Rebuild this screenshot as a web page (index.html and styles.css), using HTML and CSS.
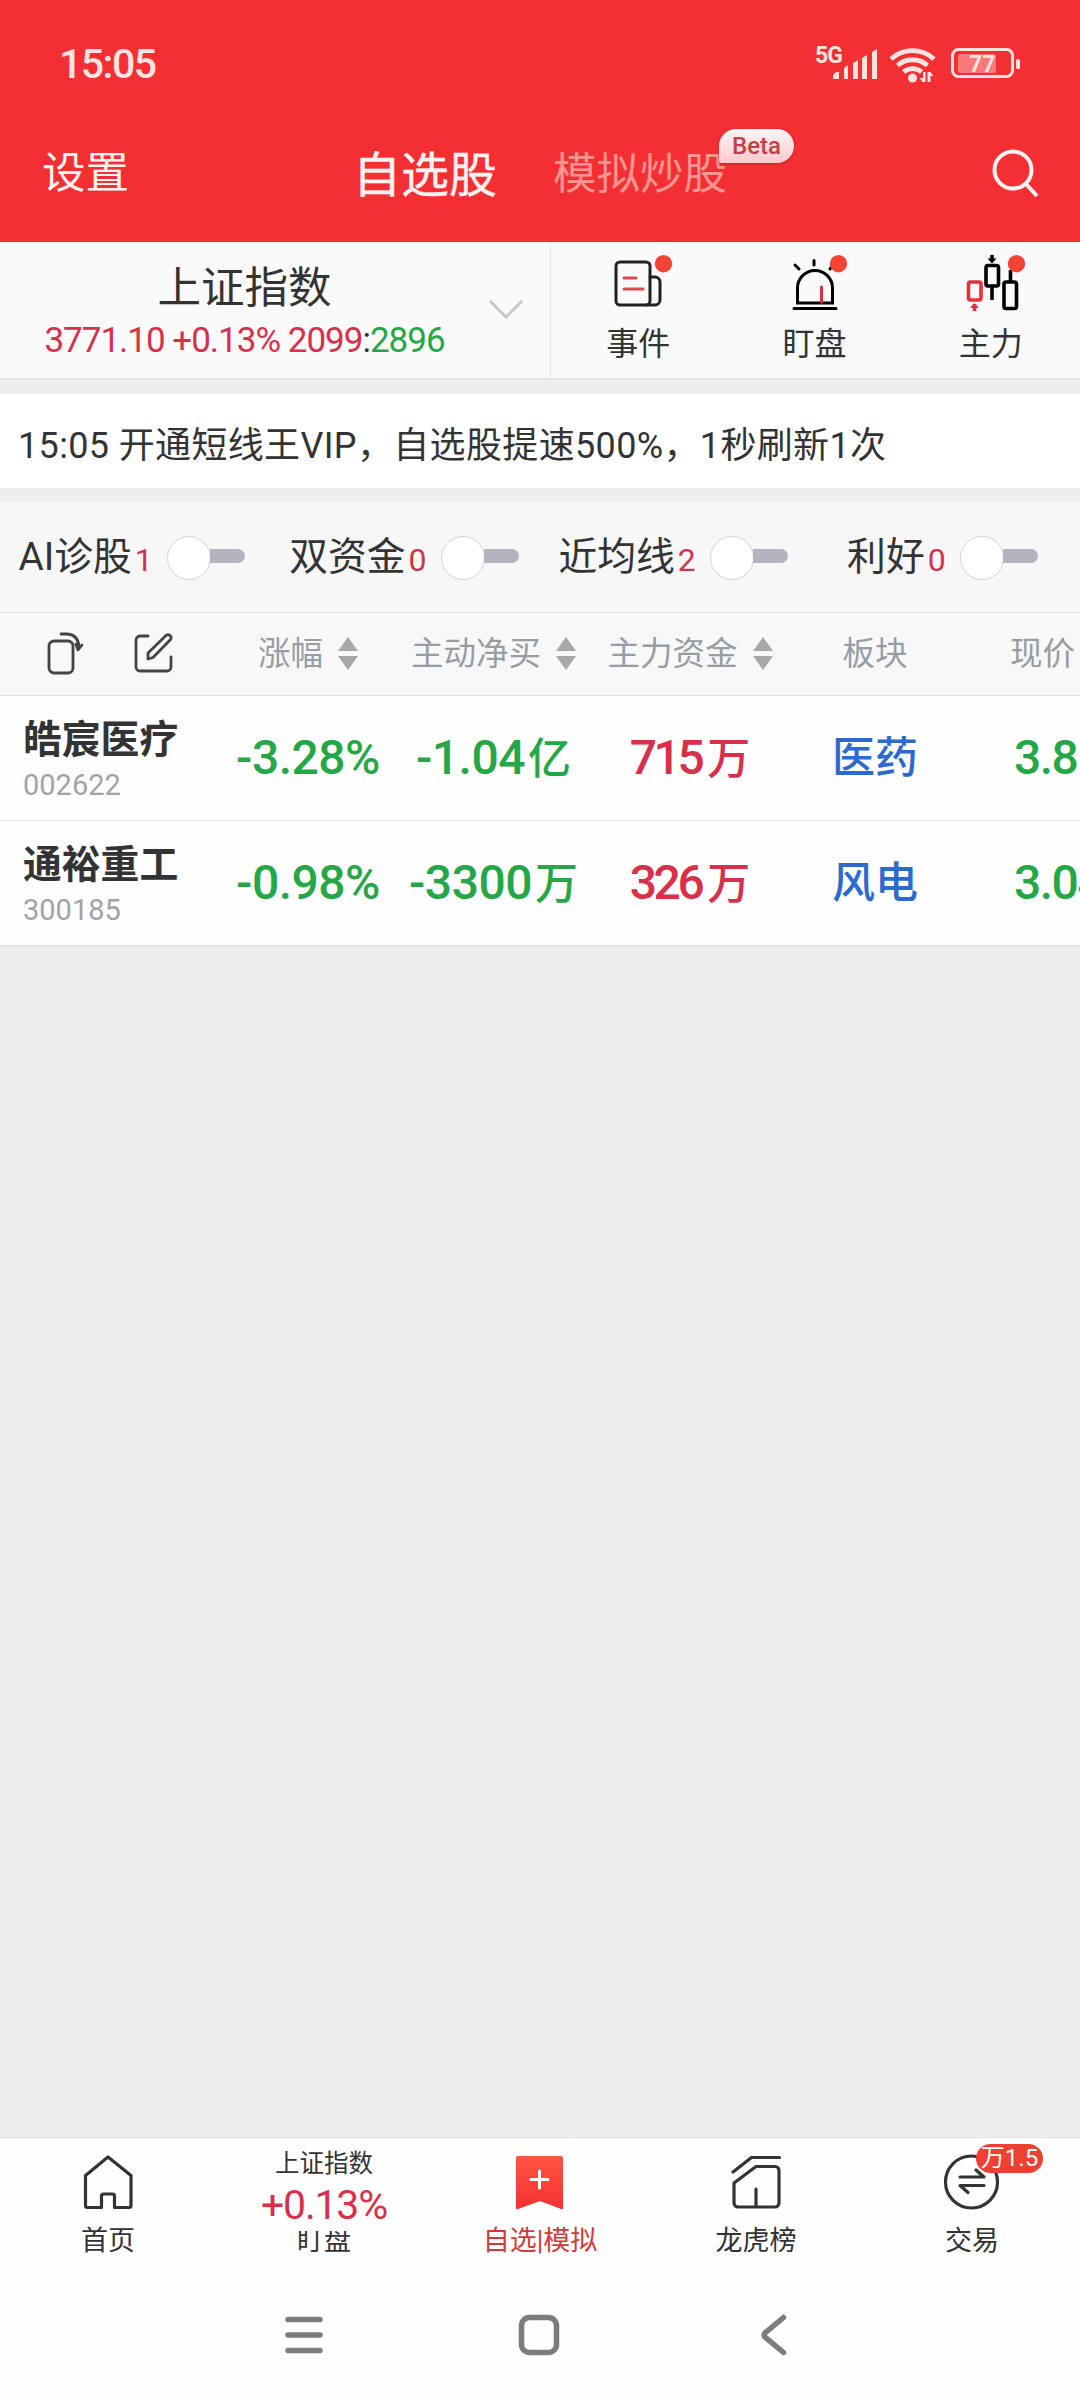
FILE: index.html
```html
<!DOCTYPE html>
<html lang="zh-CN">
<head>
    <meta charset="UTF-8">
    <meta name="viewport" content="width=device-width, initial-scale=1.0">
    <title>自选股</title>
    <link rel="stylesheet" href="styles.css">
</head>
<body>

    <!-- 顶部 -->
    <header class="top">
        <div class="status-bar">
            <span class="clock">15:05</span>
            <svg class="status-icons" width="206" height="40" viewBox="0 0 206 40">
                <text class="net" x="0" y="19">5G</text>
                <g fill="#ffe3e1">
                    <path d="M18 35v-4l3-3h3v7zM29 35V24l4-3v14zM38 35V19l5-3v19zM47 35V14l5-3v24zM57 35V8l5-3v30z"/>
                    <circle cx="97.500" cy="34" r="4.500"/>
                    <path d="M108 28h2.500v10h-3l-3-4h3.500zM112.500 38V28h3l3 4h-3v6z"/>
                    <rect x="201" y="15" width="4" height="10" rx="1.500"/>
                </g>
                <g fill="none" stroke="#ffe3e1" stroke-width="4.800">
                    <path d="M76 15a32 32 0 0 1 43 0M82.500 21.500a22.500 22.500 0 0 1 30 0M88.500 28a13.500 13.500 0 0 1 18 0"/>
                    <rect x="137.500" y="5.500" width="60" height="27" rx="6" stroke-width="3"/>
                </g>
                <rect x="143" y="10" width="38" height="19" rx="2" fill="#f9797b"/>
                <text class="power" x="154" y="28">77</text>
            </svg>
        </div>
        <div class="title-bar">
            <span class="setting">设置</span>
            <nav class="tabs">
                <span class="tab active">自选股</span>
                <span class="tab">模拟炒股<i class="beta">Beta</i></span>
            </nav>
            <svg class="search" width="50" height="52" viewBox="0 0 50 52">
                <circle cx="23" cy="23" r="18.500"/>
                <path d="M36 37l11 12"/>
            </svg>
        </div>
    </header>

    <!-- 指数 -->
    <section class="index-bar">
        <div class="index-main">
            <div class="index-text">
                <div class="index-name">上证指数</div>
                <div class="index-nums"><span class="up">3771.10 +0.13% 2099</span>:<span class="down">2896</span></div>
            </div>
            <svg class="arrow" width="34" height="20" viewBox="0 0 34 20"><path d="M1 1l16 16L33 1"/></svg>
        </div>
        <div class="tool">
            <svg width="72" height="60" viewBox="0 0 72 60">
                <g fill="none" stroke="#222" stroke-width="3" stroke-linecap="round">
                    <rect x="13" y="8" width="34" height="43" rx="4"/>
                    <path d="M47 23h5a5 5 0 0 1 5 5v18a5 5 0 0 1-5 5h-8"/>
                    <path stroke="#d9494f" d="M21 24h12M21 35h19"/>
                </g>
                <circle cx="60.500" cy="9.700" r="8.700" fill="#f54336"/>
            </svg>
            <span>事件</span>
        </div>
        <div class="tool">
            <svg width="72" height="60" viewBox="0 0 72 60">
                <g fill="none" stroke="#000" stroke-width="3" stroke-linecap="round">
                    <path d="M18.500 49V34a17.500 17.500 0 0 1 35 0v15z"/>
                    <path d="M15 54.500h42M35 6.500v4.500M16 11l4 4M54 11l-3 4"/>
                    <path stroke="#d9303a" d="M42.500 33v15"/>
                </g>
                <circle cx="59.500" cy="9.700" r="8.700" fill="#f54336"/>
            </svg>
            <span>盯盘</span>
        </div>
        <div class="tool">
            <svg width="72" height="60" viewBox="0 0 72 60">
                <g fill="none" stroke="#000" stroke-width="3.600">
                    <rect x="30" y="11.500" width="12.500" height="20.500" rx="2"/>
                    <rect x="48" y="28" width="12.500" height="26.500" rx="2"/>
                    <path d="M36 32v14M54.500 16v12"/>
                    <rect x="12.500" y="28" width="12.500" height="18" rx="2" stroke="#e5323a"/>
                    <path d="M18.500 50v7" stroke="#e5323a"/>
                    <path d="M36 1v6"/>
                </g>
                <path d="M31.500 4.500h9L36 9.500z"/>
                <path d="M14 54h9l-4.500-5z" fill="#e5323a"/>
                <circle cx="60.500" cy="9.700" r="8.700" fill="#f54336"/>
            </svg>
            <span>主力</span>
        </div>
    </section>

    <!-- 公告 -->
    <section class="notice">15:05 开通短线王VIP，自选股提速500%，1秒刷新1次</section>

    <!-- 筛选开关 -->
    <section class="filters">
        <div class="filter">AI诊股<b>1</b><i class="switch"></i></div>
        <div class="filter">双资金<b>0</b><i class="switch"></i></div>
        <div class="filter">近均线<b>2</b><i class="switch"></i></div>
        <div class="filter">利好<b>0</b><i class="switch"></i></div>
    </section>

    <!-- 自选列表 -->
    <main class="stock-list">
        <div class="row head">
            <div class="actions">
                <svg width="40" height="44" viewBox="0 0 40 44">
                    <rect x="3" y="9" width="24" height="32" rx="5"/>
                    <path d="M15 2h5q13 0 13 15M36 13l-4 5-2-6"/>
                </svg>
                <svg width="40" height="44" viewBox="0 0 40 44">
                    <path d="M15 4H7a4 4 0 0 0-4 4v27a4 4 0 0 0 4 4h27a4 4 0 0 0 4-4V25"/>
                    <path d="M15 27v-6L33 3.500q2-1.500 4 0 2 2 .500 4L20 25.500z"/>
                </svg>
            </div>
            <div class="cell">涨幅<i class="sort"></i></div>
            <div class="cell">主动净买<i class="sort"></i></div>
            <div class="cell">主力资金<i class="sort"></i></div>
            <div class="cell">板块</div>
            <div class="cell price">现价</div>
        </div>
        <div class="row">
            <div class="stock">
                <div class="name">皓宸医疗</div>
                <div class="code">002622</div>
            </div>
            <div class="cell down">-3.28%</div>
            <div class="cell down">-1.04<span>亿</span></div>
            <div class="cell up">715<span>万</span></div>
            <div class="cell plate"><span>医药</span></div>
            <div class="cell price down">3.8</div>
        </div>
        <div class="row">
            <div class="stock">
                <div class="name">通裕重工</div>
                <div class="code">300185</div>
            </div>
            <div class="cell down">-0.98%</div>
            <div class="cell down">-3300<span>万</span></div>
            <div class="cell up">326<span>万</span></div>
            <div class="cell plate"><span>风电</span></div>
            <div class="cell price down">3.04</div>
        </div>
    </main>

    <!-- 底部导航 -->
    <footer class="bottom">
        <nav class="menu">
            <a class="item">
                <svg width="60" height="60" viewBox="0 0 60 60">
                    <path d="M23.500 54.500H9.500a2 2 0 0 1-2-2V22.500L30 4l23 18.500v30a2 2 0 0 1-2 2H36.500V43a2 2 0 0 0-2-2h-9a2 2 0 0 0-2 2z"/>
                </svg>
                <span class="label">首页</span>
            </a>
            <a class="item quote">
                <span class="quote-name">上证指数</span>
                <span class="quote-rate">+0.13%</span>
                <span class="label">盯盘</span>
            </a>
            <a class="item current">
                <svg width="60" height="60" viewBox="0 0 60 60">
                    <defs>
                        <linearGradient id="mark" x1="0" y1="0" x2="0" y2="1">
                            <stop offset="0" stop-color="#ff5543"/>
                            <stop offset="1" stop-color="#f4302f"/>
                        </linearGradient>
                    </defs>
                    <path class="mark" d="M8 3h43a2 2 0 0 1 2 2v50q0 2-2 1L30 48 8 56q-2 1-2-1V5a2 2 0 0 1 2-2z"/>
                    <path class="plus" d="M21 26.500h17M29.500 18v17"/>
                </svg>
                <span class="label">自选|模拟</span>
            </a>
            <a class="item">
                <svg width="60" height="60" viewBox="0 0 60 60">
                    <path d="M7 19L25.500 4.500H53.500"/>
                    <path d="M30 13.500h19a4 4 0 0 1 4 4V50a4 4 0 0 1-4 4H12a4 4 0 0 1-4-4V30z"/>
                    <path d="M30 36v17"/>
                </svg>
                <span class="label">龙虎榜</span>
            </a>
            <a class="item">
                <svg width="60" height="60" viewBox="0 0 60 60">
                    <circle cx="29.500" cy="29" r="26"/>
                    <path d="M18 24h24l-8-7M42 32.500H18l8 7"/>
                </svg>
                <em class="badge">万1.5</em>
                <span class="label">交易</span>
            </a>
        </nav>
        <div class="system-keys">
            <svg width="44" height="44" viewBox="0 0 44 44"><path d="M6 6.500h32M6 22h32M6 37.500h32"/></svg>
            <svg width="44" height="44" viewBox="0 0 44 44"><rect x="4.500" y="4.500" width="35" height="35" rx="8"/></svg>
            <svg width="44" height="44" viewBox="0 0 44 44"><path d="M31.500 4.500L14 19q-4 3 0 6l17.500 14.500"/></svg>
        </div>
    </footer>

</body>
</html>
```
FILE: styles.css
```css
* {
    box-sizing: border-box;
}

body {
    margin: 0;
    width: 1080px;
    height: 2400px;
    display: flex;
    flex-direction: column;
    overflow: hidden;
    background-color: #edeef0;
    color: #333;
    font-family: Roboto, "Noto Sans CJK SC", sans-serif;
}

i, em {
    font-style: normal;
}

.up {
    color: #d8304a;
}

.down {
    color: #25a748;
}

/* 顶部 */
.top {
    height: 242px;
    background-color: #f32f33;
    color: #fff3f1;
}

.status-bar {
    height: 128px;
    padding: 0 59px 0 59px;
    display: flex;
    align-items: center;
    justify-content: space-between;
}

.clock {
    font-size: 41px;
    font-weight: 500;
    letter-spacing: -1.5px;
    color: #ffe3e1;
}

.status-icons {
    overflow: visible;
}

.status-icons text {
    fill: #ffe3e1;
    font-weight: 700;
}

.status-icons .net {
    font-size: 23px;
    letter-spacing: -1px;
}

.status-icons .power {
    font-size: 23px;
}

.title-bar {
    height: 90px;
    padding: 0 40px 0 42px;
    display: flex;
    align-items: center;
}

.setting {
    width: 311px;
    padding-bottom: 8px;
    font-size: 43.5px;
}

.tabs {
    flex: 1;
    padding-bottom: 5px;
    display: flex;
    align-items: center;
    gap: 56px;
}

.tab {
    position: relative;
    font-size: 43.5px;
    color: #ff9592;
}

.tab.active {
    font-size: 48px;
    -webkit-text-stroke: 0.4px #fff3f1;
    color: #fff3f1;
}

.beta {
    position: absolute;
    left: 166px;
    top: -10px;
    width: 75px;
    height: 34px;
    border-radius: 17px 17px 17px 2px;
    background: linear-gradient(#fff6f6, #ffc9cc);
    box-shadow: 0 1px 3px #b22;
    color: #c33f47;
    font-size: 24px;
    font-weight: 500;
    line-height: 34px;
    text-align: center;
}

.search {
    fill: none;
    stroke: #fff3f1;
    stroke-width: 4;
}

/* 指数 */
.index-bar {
    height: 138px;
    display: flex;
    background-color: #fafafb;
    border-bottom: 2px solid #e3e3e4;
}

.index-main {
    width: 551px;
    display: flex;
    align-items: center;
    border-right: 1px solid #e6e6e8;
}

.index-text {
    width: 489px;
    padding-top: 8px;
    text-align: center;
}

.index-name {
    font-size: 43.5px;
    line-height: 54px;
}

.index-nums {
    font-size: 35px;
    line-height: 50px;
    letter-spacing: -1px;
    white-space: nowrap;
}

.arrow {
    fill: none;
    stroke: #c8c8c8;
    stroke-width: 3;
}

.tool {
    flex: 1;
    padding-top: 12px;
    display: flex;
    flex-direction: column;
    align-items: center;
    font-size: 32px;
    line-height: 60px;
}

.tool span {
    padding-right: 2px;
}

/* 公告 */
.notice {
    height: 94px;
    margin: 14px 0;
    padding-left: 18px;
    background-color: #fff;
    font-size: 36px;
    line-height: 105px;
    letter-spacing: 0.35px;
    white-space: nowrap;
}

/* 筛选开关 */
.filters {
    height: 111px;
    padding-right: 3px;
    display: flex;
    background-color: #f7f7f8;
    border-bottom: 1px solid #e2e2e3;
    font-size: 38.8px;
    line-height: 109px;
}

.filter {
    flex: 1;
    display: flex;
    justify-content: center;
}

.filter:first-child {
    margin-left: -3px;
    margin-right: 3px;
}

.filter b {
    margin: 4px 14px 0 3px;
    font-size: 32px;
    font-weight: 400;
    color: #cf3450;
}

.switch {
    margin-top: 34px;
    width: 78px;
    height: 42px;
    display: flex;
}

.switch::before {
    content: "";
    width: 42px;
    height: 42px;
    border: 1px solid #d5d5d8;
    border-radius: 50%;
    background-color: #fff;
}

.switch::after {
    content: "";
    flex: 1;
    height: 14px;
    margin: 13px 0 0 -1px;
    border-radius: 0 7px 7px 0;
    background-color: #b5b3bf;
}

/* 自选列表 */
.row {
    height: 125px;
    display: grid;
    grid-template-columns: 226px 164px 207px 186px 184px 113px;
    align-items: center;
    overflow: hidden;
    background-color: #fefefe;
    border-bottom: 1px solid #e2e2e3;
}

.row.head {
    height: 83px;
    background-color: #f8f8f9;
}

.actions {
    padding-left: 46px;
    display: flex;
    gap: 47px;
    fill: none;
    stroke: #444;
    stroke-width: 2.8;
    stroke-linecap: round;
    stroke-linejoin: round;
}

.stock {
    padding: 4px 0 0 23px;
}

.name {
    font-size: 38.8px;
    font-weight: 700;
    line-height: 50px;
}

.code {
    font-size: 29px;
    line-height: 40px;
    color: #a3a3a6;
}

.cell {
    display: flex;
    align-items: baseline;
    justify-content: center;
    padding-bottom: 1px;
    font-size: 48px;
    font-weight: 500;
    line-height: 56px;
    letter-spacing: -0.5px;
    white-space: nowrap;
}

.cell span {
    margin-left: 3px;
    font-size: 43px;
    line-height: 54px;
    letter-spacing: 0;
}

.cell.up {
    letter-spacing: -3.5px;
}

.cell.up span {
    margin-left: 6px;
}

.cell.price {
    padding-left: 47px;
    justify-content: flex-start;
    letter-spacing: -1.5px;
}

.cell.plate {
    color: #2c6bcd;
}

.plate span {
    margin-left: 0;
}

.head .cell {
    align-items: center;
    font-size: 32.5px;
    font-weight: 400;
    letter-spacing: 0;
    color: #969da4;
}

.head .price {
    padding-left: 43px;
}

.sort {
    margin-left: 15px;
    display: flex;
    flex-direction: column;
    gap: 5px;
}

.sort::before,
.sort::after {
    content: "";
    border: 10px solid transparent;
    border-top-width: 0;
    border-bottom: 14px solid #a8a8a8;
}

.sort::after {
    border-bottom-width: 0;
    border-top: 14px solid #a8a8a8;
}

/* 底部导航 */
.bottom {
    margin-top: auto;
    height: 263px;
    background-color: #fefefe;
    border-top: 1px solid #dfe0e2;
}

.menu {
    height: 132px;
    display: flex;
}

.item {
    position: relative;
    flex: 1;
    padding-top: 15px;
    display: flex;
    flex-direction: column;
    align-items: center;
    font-size: 27px;
}

.item svg {
    fill: none;
    stroke: #333;
    stroke-width: 3.2;
    stroke-linecap: round;
    stroke-linejoin: round;
}

.item .mark {
    fill: url(#mark);
    stroke: none;
}

.item .plus {
    stroke: #fff;
    stroke-width: 3;
}

.label {
    line-height: 56px;
}

.current .label {
    color: #d23a3a;
}

.quote {
    padding-top: 9px;
}

.quote-name {
    font-size: 24.5px;
    line-height: 33px;
}

.quote-rate {
    font-size: 41px;
    line-height: 51px;
    letter-spacing: -1.2px;
    color: #d8304a;
}

/* 涨幅压住标签的上沿 */
.quote .label {
    height: 30px;
    overflow: hidden;
    line-height: 20px;
}

.badge {
    position: absolute;
    left: 112px;
    top: 6px;
    width: 67px;
    height: 29px;
    border-radius: 15px;
    background-color: #ef4034;
    color: #fff;
    font-size: 24px;
    line-height: 29px;
    text-align: center;
}

.system-keys {
    height: 130px;
    padding-right: 2px;
    display: flex;
    align-items: center;
    justify-content: center;
    gap: 191px;
    fill: none;
    stroke: #7c7c7c;
    stroke-width: 5.5;
    stroke-linecap: round;
}
```
